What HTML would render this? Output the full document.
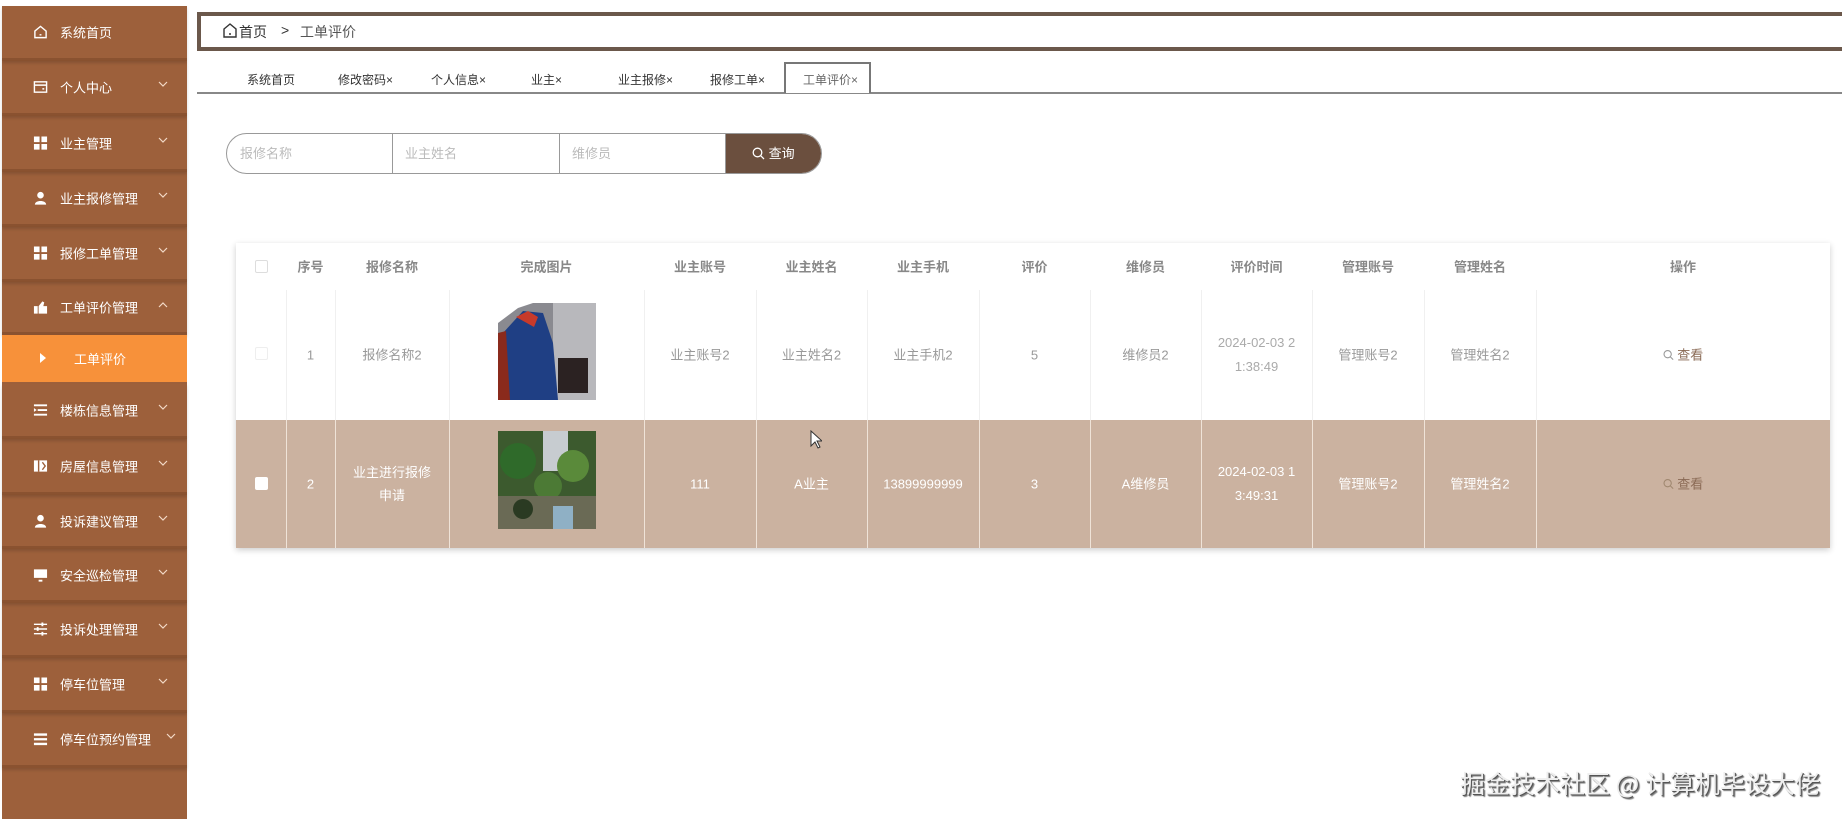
<!DOCTYPE html>
<html><head><meta charset="utf-8">
<style>
*{margin:0;padding:0;box-sizing:border-box}
body{width:1842px;height:819px;overflow:hidden;background:#fff;font-family:"Liberation Sans","Noto Sans CJK SC",sans-serif;font-size:14px;color:#666;position:relative}
.side{position:absolute;left:2px;top:6px;width:185px;height:813px;background:#9d603b}
.it{position:absolute;left:0;width:185px;color:#fff;font-size:13px;border-bottom:3px solid #8a5230;box-shadow:0 2px 3px rgba(0,0,0,.15)}
.it span.t{position:absolute;left:58px;top:50%;transform:translateY(-50%)}
.it .ic{position:absolute;left:31px;top:50%;transform:translateY(-50%);width:15px;height:15px}
.it .ch{position:absolute;left:156px;top:50%;margin-top:-6px;width:10px;height:7px}
.sub{position:absolute;left:0;top:329px;width:185px;height:47px;background:#f7913a;color:#fff;font-size:13px}
.abs{position:absolute}
.bc{position:absolute;left:197px;top:12px;width:1700px;height:39px;border:4px solid #6b584b;border-right:none}
.tabs{position:absolute;left:197px;top:92px;width:1645px;height:2px;background:#888}
.tab{position:absolute;top:71px;font-size:12px;color:#333}
.search{position:absolute;left:226px;top:133px;width:596px;height:41px;border:1px solid #999;border-radius:21px;overflow:hidden}
.search div{position:absolute;top:0;height:39px;line-height:39px;color:#bbb;font-size:13px;padding-left:12px;border-right:1px solid #999}
.tbl{position:absolute;left:236px;top:243px;width:1594px;height:305px;box-shadow:0 2px 6px rgba(0,0,0,.2);background:#fff}
.r2{position:absolute;left:0;top:177px;width:1594px;height:128px;background:#cbb2a0}
.vl{position:absolute;width:1px}
.c{position:absolute;text-align:center;font-size:13px;line-height:23px;transform:translateY(-50%)}
.h{color:#888;font-weight:bold}
.w{color:#fff}
.wm{position:absolute;left:1460px;top:765px;font-size:25px;color:#eee;text-shadow:1px 1px 0 #555,2px 2px 1px #777;font-family:"Noto Sans CJK SC",sans-serif}
</style></head><body>
<svg width="0" height="0" style="position:absolute"><defs><path id="chv" d="M1 1l4 4 4-4" fill="none" stroke="#f3d9c6" stroke-width="1.2"/></defs></svg>
<div class="side">
  <div class="it" style="top:0;height:55px"><svg class="ic" viewBox="0 0 16 16"><path d="M2 7 8 2l6 5v7H2z M7 11h2" fill="none" stroke="#fff" stroke-width="1.5"/></svg><span class="t">系统首页</span></div>
  <div class="it" style="top:55px;height:55px"><svg class="ic" viewBox="0 0 16 16"><rect x="1.5" y="2.5" width="13" height="11" fill="none" stroke="#fff" stroke-width="1.5"/><path d="M1.5 6h13M10 10h2" stroke="#fff" stroke-width="1.5"/></svg><span class="t">个人中心</span><svg class="ch" viewBox="0 0 10 7"><use href="#chv"/></svg></div>
  <div class="it" style="top:110px;height:56px"><svg class="ic" viewBox="0 0 16 16"><path d="M1 1h6v6H1zM9 1h6v6H9zM1 9h6v6H1zM9 9h6v6H9z" fill="#fff"/></svg><span class="t">业主管理</span><svg class="ch" viewBox="0 0 10 7"><use href="#chv"/></svg></div>
  <div class="it" style="top:166px;height:55px"><svg class="ic" viewBox="0 0 16 16"><circle cx="8" cy="5" r="3.5" fill="#fff"/><path d="M2 15c0-5 12-5 12 0z" fill="#fff"/></svg><span class="t">业主报修管理</span><svg class="ch" viewBox="0 0 10 7"><use href="#chv"/></svg></div>
  <div class="it" style="top:221px;height:55px"><svg class="ic" viewBox="0 0 16 16"><path d="M1 1h6v6H1zM9 1h6v6H9zM1 9h6v6H1zM9 9h6v6H9z" fill="#fff"/></svg><span class="t">报修工单管理</span><svg class="ch" viewBox="0 0 10 7"><use href="#chv"/></svg></div>
  <div class="it" style="top:276px;height:53px"><svg class="ic" viewBox="0 0 16 16"><path d="M1 7h4v8H1zM6 7l4-5 2 1-1 4h4v8H6z" fill="#fff"/></svg><span class="t">工单评价管理</span><svg class="ch" viewBox="0 0 10 7" style="transform:rotate(180deg)"><use href="#chv"/></svg></div>
  <div class="sub"><svg class="abs" style="left:38px;top:18px" width="6" height="10" viewBox="0 0 6 10"><path d="M0 0l6 5-6 5z" fill="#fff"/></svg><span class="abs" style="left:72px;top:14px">工单评价</span></div>
  <div class="it" style="top:378px;height:55px"><svg class="ic" viewBox="0 0 16 16"><path d="M1 2h14v2H1zM5 7h10v2H5zM1 12h14v2H1zM1 6l3 2-3 2z" fill="#fff"/></svg><span class="t">楼栋信息管理</span><svg class="ch" viewBox="0 0 10 7"><use href="#chv"/></svg></div>
  <div class="it" style="top:433px;height:56px"><svg class="ic" viewBox="0 0 16 16"><path d="M1 2h14v12H1z" fill="#fff"/><path d="M6 2v12M10 4l3 4-3 4" stroke="#9d603b" stroke-width="1.5" fill="none"/></svg><span class="t">房屋信息管理</span><svg class="ch" viewBox="0 0 10 7"><use href="#chv"/></svg></div>
  <div class="it" style="top:489px;height:54px"><svg class="ic" viewBox="0 0 16 16"><circle cx="8" cy="5" r="3.5" fill="#fff"/><path d="M2 15c0-5 12-5 12 0z" fill="#fff"/></svg><span class="t">投诉建议管理</span><svg class="ch" viewBox="0 0 10 7"><use href="#chv"/></svg></div>
  <div class="it" style="top:543px;height:54px"><svg class="ic" viewBox="0 0 16 16"><path d="M1 2h14v9H1zM6 13h4v2H6z" fill="#fff"/></svg><span class="t">安全巡检管理</span><svg class="ch" viewBox="0 0 10 7"><use href="#chv"/></svg></div>
  <div class="it" style="top:597px;height:55px"><svg class="ic" viewBox="0 0 16 16"><path d="M1 3h14M1 8h14M1 13h14" stroke="#fff" stroke-width="1.5"/><path d="M10 1v4M5 6v4M10 11v4" stroke="#fff" stroke-width="2"/></svg><span class="t">投诉处理管理</span><svg class="ch" viewBox="0 0 10 7"><use href="#chv"/></svg></div>
  <div class="it" style="top:652px;height:55px"><svg class="ic" viewBox="0 0 16 16"><path d="M1 1h6v6H1zM9 1h6v6H9zM1 9h6v6H1zM9 9h6v6H9z" fill="#fff"/></svg><span class="t">停车位管理</span><svg class="ch" viewBox="0 0 10 7"><use href="#chv"/></svg></div>
  <div class="it" style="top:707px;height:55px"><svg class="ic" viewBox="0 0 16 16"><path d="M1 2h14v2.5H1zM1 7h14v2.5H1zM1 12h14v2.5H1z" fill="#fff"/></svg><span class="t">停车位预约管理</span><svg class="ch" viewBox="0 0 10 7" style="left:164px"><use href="#chv"/></svg></div>
</div>

<div class="bc"></div>
<svg class="abs" style="left:222px;top:22px" width="16" height="17" viewBox="0 0 16 17"><path d="M2 7 8 2l6 5v8H2zM7 12h2" fill="none" stroke="#333" stroke-width="1.4"/></svg>
<span class="abs" style="left:239px;top:22px;font-size:14px;color:#333">首页</span>
<span class="abs" style="left:281px;top:22px;font-size:14px;color:#333">&gt;</span>
<span class="abs" style="left:300px;top:22px;font-size:14px;color:#555">工单评价</span>

<div class="tabs"></div>
<div class="abs" style="left:784px;top:62px;width:87px;height:31px;border:2px solid #777;border-bottom:none;background:#fff"></div>
<span class="tab" style="left:247px">系统首页</span>
<span class="tab" style="left:338px">修改密码×</span>
<span class="tab" style="left:431px">个人信息×</span>
<span class="tab" style="left:531px">业主×</span>
<span class="tab" style="left:618px">业主报修×</span>
<span class="tab" style="left:710px">报修工单×</span>
<span class="tab" style="left:803px;color:#666">工单评价×</span>

<div class="search">
  <div style="left:0;width:166px;padding-left:13px">报修名称</div>
  <div style="left:166px;width:167px">业主姓名</div>
  <div style="left:333px;width:166px">维修员</div>
  <div style="left:499px;width:100px;background:#6b4f3e;color:#fff;border:none;padding-left:26px"><svg style="vertical-align:-2px" width="13" height="13" viewBox="0 0 13 13"><circle cx="5.5" cy="5.5" r="4.3" fill="none" stroke="#fff" stroke-width="1.3"/><path d="M8.7 8.7 12 12" stroke="#fff" stroke-width="1.3"/></svg> 查询</div>
</div>

<div class="tbl">
  <div class="r2"></div>
  <div class="vl" style="left:50px;top:47px;height:130px;background:#f0f0f0"></div>
  <div class="vl" style="left:99px;top:47px;height:130px;background:#f0f0f0"></div>
  <div class="vl" style="left:213px;top:47px;height:130px;background:#f0f0f0"></div>
  <div class="vl" style="left:408px;top:47px;height:130px;background:#f0f0f0"></div>
  <div class="vl" style="left:520px;top:47px;height:130px;background:#f0f0f0"></div>
  <div class="vl" style="left:631px;top:47px;height:130px;background:#f0f0f0"></div>
  <div class="vl" style="left:743px;top:47px;height:130px;background:#f0f0f0"></div>
  <div class="vl" style="left:854px;top:47px;height:130px;background:#f0f0f0"></div>
  <div class="vl" style="left:965px;top:47px;height:130px;background:#f0f0f0"></div>
  <div class="vl" style="left:1076px;top:47px;height:130px;background:#f0f0f0"></div>
  <div class="vl" style="left:1188px;top:47px;height:130px;background:#f0f0f0"></div>
  <div class="vl" style="left:1300px;top:47px;height:130px;background:#f0f0f0"></div>
  <div class="vl" style="left:50px;top:177px;height:128px;background:#efe3d8"></div>
  <div class="vl" style="left:99px;top:177px;height:128px;background:#efe3d8"></div>
  <div class="vl" style="left:213px;top:177px;height:128px;background:#efe3d8"></div>
  <div class="vl" style="left:408px;top:177px;height:128px;background:#efe3d8"></div>
  <div class="vl" style="left:520px;top:177px;height:128px;background:#efe3d8"></div>
  <div class="vl" style="left:631px;top:177px;height:128px;background:#efe3d8"></div>
  <div class="vl" style="left:743px;top:177px;height:128px;background:#efe3d8"></div>
  <div class="vl" style="left:854px;top:177px;height:128px;background:#efe3d8"></div>
  <div class="vl" style="left:965px;top:177px;height:128px;background:#efe3d8"></div>
  <div class="vl" style="left:1076px;top:177px;height:128px;background:#efe3d8"></div>
  <div class="vl" style="left:1188px;top:177px;height:128px;background:#efe3d8"></div>
  <div class="vl" style="left:1300px;top:177px;height:128px;background:#efe3d8"></div>

  <div class="abs" style="left:19px;top:17px;width:13px;height:13px;border:1px solid #ddd;border-radius:2px"></div>
  <div class="c h" style="left:50px;width:49px;top:24px">序号</div>
  <div class="c h" style="left:99px;width:114px;top:24px">报修名称</div>
  <div class="c h" style="left:213px;width:195px;top:24px">完成图片</div>
  <div class="c h" style="left:408px;width:112px;top:24px">业主账号</div>
  <div class="c h" style="left:520px;width:111px;top:24px">业主姓名</div>
  <div class="c h" style="left:631px;width:112px;top:24px">业主手机</div>
  <div class="c h" style="left:743px;width:111px;top:24px">评价</div>
  <div class="c h" style="left:854px;width:111px;top:24px">维修员</div>
  <div class="c h" style="left:965px;width:111px;top:24px">评价时间</div>
  <div class="c h" style="left:1076px;width:112px;top:24px">管理账号</div>
  <div class="c h" style="left:1188px;width:112px;top:24px">管理姓名</div>
  <div class="c h" style="left:1300px;width:294px;top:24px">操作</div>

  <div class="abs" style="left:19px;top:104px;width:13px;height:13px;border:1px solid #eee;border-radius:2px"></div>
  <div class="c" style="left:50px;width:49px;top:112px;color:#999">1</div>
  <div class="c" style="left:99px;width:114px;top:112px;color:#999">报修名称2</div>
  <svg class="abs" style="left:262px;top:60px" width="98" height="97" viewBox="0 0 98 97"><rect width="98" height="97" fill="#8a8a90"/><rect x="55" y="0" width="43" height="97" fill="#b8b8bc"/><path d="M0 20 20 5 35 0 0 0z" fill="#fff"/><path d="M5 30 25 8 45 10 55 40 60 97 10 97z" fill="#1f3f84"/><path d="M0 30 8 28 12 97 0 97z" fill="#8a2a1c"/><rect x="60" y="55" width="30" height="35" fill="#2b2222"/><path d="M18 14 30 8 40 14 36 24z" fill="#c83a2a"/></svg>
  <div class="c" style="left:408px;width:112px;top:112px;color:#999">业主账号2</div>
  <div class="c" style="left:520px;width:111px;top:112px;color:#999">业主姓名2</div>
  <div class="c" style="left:631px;width:112px;top:112px;color:#999">业主手机2</div>
  <div class="c" style="left:743px;width:111px;top:112px;color:#999">5</div>
  <div class="c" style="left:854px;width:111px;top:112px;color:#999">维修员2</div>
  <div class="c" style="left:965px;width:111px;top:112px;color:#aaa;line-height:24px">2024-02-03 2<br>1:38:49</div>
  <div class="c" style="left:1076px;width:112px;top:112px;color:#999">管理账号2</div>
  <div class="c" style="left:1188px;width:112px;top:112px;color:#999">管理姓名2</div>
  <div class="c" style="left:1300px;width:294px;top:112px;color:#8a6a55"><svg style="vertical-align:-1px" width="11" height="11" viewBox="0 0 13 13"><circle cx="5.5" cy="5.5" r="4.3" fill="none" stroke="#999" stroke-width="1.3"/><path d="M8.7 8.7 12 12" stroke="#999" stroke-width="1.3"/></svg> 查看</div>

  <div class="abs" style="left:19px;top:234px;width:13px;height:13px;background:#fff;border-radius:2px"></div>
  <div class="c w" style="left:50px;width:49px;top:241px">2</div>
  <div class="c w" style="left:99px;width:114px;top:241px">业主进行报修<br>申请</div>
  <svg class="abs" style="left:262px;top:188px" width="98" height="98" viewBox="0 0 98 98"><rect width="98" height="98" fill="#3c5a2e"/><rect x="45" y="0" width="25" height="40" fill="#c7ccd0"/><circle cx="20" cy="30" r="18" fill="#2f6a2a"/><circle cx="75" cy="35" r="16" fill="#5a8a3a"/><circle cx="50" cy="55" r="14" fill="#4c7a35"/><rect x="0" y="65" width="98" height="33" fill="#6a6a55"/><circle cx="25" cy="78" r="10" fill="#2a3a22"/><rect x="55" y="75" width="20" height="23" fill="#8fb0c5"/></svg>
  <div class="c w" style="left:408px;width:112px;top:241px">111</div>
  <div class="c w" style="left:520px;width:111px;top:241px">A业主</div>
  <div class="c w" style="left:631px;width:112px;top:241px">13899999999</div>
  <div class="c w" style="left:743px;width:111px;top:241px">3</div>
  <div class="c w" style="left:854px;width:111px;top:241px">A维修员</div>
  <div class="c w" style="left:965px;width:111px;top:241px;line-height:24px">2024-02-03 1<br>3:49:31</div>
  <div class="c w" style="left:1076px;width:112px;top:241px">管理账号2</div>
  <div class="c w" style="left:1188px;width:112px;top:241px">管理姓名2</div>
  <div class="c" style="left:1300px;width:294px;top:241px;color:#8a6a55"><svg style="vertical-align:-1px" width="11" height="11" viewBox="0 0 13 13"><circle cx="5.5" cy="5.5" r="4.3" fill="none" stroke="#a08870" stroke-width="1.3"/><path d="M8.7 8.7 12 12" stroke="#a08870" stroke-width="1.3"/></svg> 查看</div>
</div>

<svg class="abs" style="left:810px;top:430px" width="12" height="19" viewBox="0 0 12 19"><path d="M1 1v15l4-4 3 6 2-1-3-6h5z" fill="#fff" stroke="#333"/></svg>

<div class="wm">掘金技术社区 @ 计算机毕设大佬</div>
</body></html>
